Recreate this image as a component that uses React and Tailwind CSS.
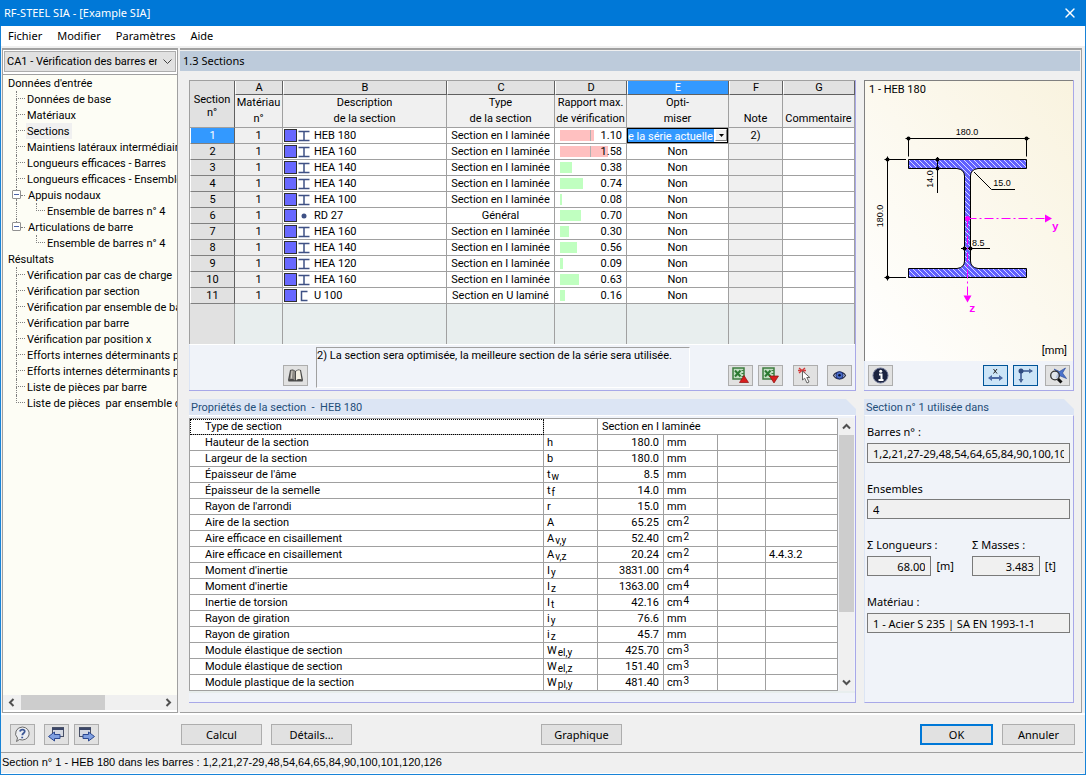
import React from 'react';
import { X } from 'lucide-react';

const MENUS = ['Fichier', 'Modifier', 'Paramètres', 'Aide'];

const INPUT_TREE = [
  { label: 'Données de base' },
  { label: 'Matériaux' },
  { label: 'Sections', active: true },
  { label: 'Maintiens latéraux intermédiaires' },
  { label: 'Longueurs efficaces - Barres' },
  { label: 'Longueurs efficaces - Ensembles' },
  { label: 'Appuis nodaux', children: ['Ensemble de barres n° 4'] },
  { label: 'Articulations de barre', children: ['Ensemble de barres n° 4'] },
];

const RESULT_TREE = [
  { label: 'Vérification par cas de charge' },
  { label: 'Vérification par section' },
  { label: 'Vérification par ensemble de barres' },
  { label: 'Vérification par barre' },
  { label: 'Vérification par position x' },
  { label: 'Efforts internes déterminants par barre' },
  { label: 'Efforts internes déterminants par ensemble' },
  { label: 'Liste de pièces par barre' },
  { label: 'Liste de pièces  par ensemble de barres' },
];

const SECTIONS = [
  { name: 'HEB 180', shape: 'I', type: 'Section en I laminée', ratio: 1.1 },
  { name: 'HEA 160', shape: 'I', type: 'Section en I laminée', ratio: 1.58 },
  { name: 'HEA 140', shape: 'I', type: 'Section en I laminée', ratio: 0.38 },
  { name: 'HEA 140', shape: 'I', type: 'Section en I laminée', ratio: 0.74 },
  { name: 'HEA 100', shape: 'I', type: 'Section en I laminée', ratio: 0.08 },
  { name: 'RD 27', shape: 'O', type: 'Général', ratio: 0.7 },
  { name: 'HEA 160', shape: 'I', type: 'Section en I laminée', ratio: 0.3 },
  { name: 'HEA 140', shape: 'I', type: 'Section en I laminée', ratio: 0.56 },
  { name: 'HEA 120', shape: 'I', type: 'Section en I laminée', ratio: 0.09 },
  { name: 'HEA 160', shape: 'I', type: 'Section en I laminée', ratio: 0.63 },
  { name: 'U 100', shape: 'U', type: 'Section en U laminé', ratio: 0.16 },
];

const HEADERS = [
  ['Matériau', 'n°'],
  ['Description', 'de la section'],
  ['Type', 'de la section'],
  ['Rapport max.', 'de vérification'],
  ['Opti-', 'miser'],
  ['', 'Note'],
  ['', 'Commentaire'],
];

const PROPERTIES = [
  ['Hauteur de la section', 'h', '', '180.0', 'mm', ''],
  ['Largeur de la section', 'b', '', '180.0', 'mm', ''],
  ["Épaisseur de l'âme", 't', 'w', '8.5', 'mm', ''],
  ['Épaisseur de la semelle', 't', 'f', '14.0', 'mm', ''],
  ["Rayon de l'arrondi", 'r', '', '15.0', 'mm', ''],
  ['Aire de la section', 'A', '', '65.25', 'cm', '2'],
  ['Aire efficace en cisaillement', 'A', 'v,y', '52.40', 'cm', '2'],
  ['Aire efficace en cisaillement', 'A', 'v,z', '20.24', 'cm', '2', '4.4.3.2'],
  ["Moment d'inertie", 'I', 'y', '3831.00', 'cm', '4'],
  ["Moment d'inertie", 'I', 'z', '1363.00', 'cm', '4'],
  ['Inertie de torsion', 'I', 't', '42.16', 'cm', '4'],
  ['Rayon de giration', 'i', 'y', '76.6', 'mm', ''],
  ['Rayon de giration', 'i', 'z', '45.7', 'mm', ''],
  ['Module élastique de section', 'W', 'el,y', '425.70', 'cm', '3'],
  ['Module élastique de section', 'W', 'el,z', '151.40', 'cm', '3'],
  ['Module plastique de la section', 'W', 'pl,y', '481.40', 'cm', '3'],
];

const IconButton = ({ label, pressed, children }) => (
  <button
    aria-label={label}
    className={`flex h-[21px] w-[25px] shrink-0 items-center justify-center border ${
      pressed ? 'border-[#005499] bg-[#cce4f7]' : 'border-[#adadad] bg-[#e1e1e1]'
    }`}
  >
    {children}
  </button>
);

const PushButton = ({ className = '', children }) => (
  <button className={`h-[21px] shrink-0 bg-[#e1e1e1] text-center leading-[17px] ${className}`}>{children}</button>
);

const Chevron = ({ d }) => (
  <svg width="9" height="9" viewBox="0 0 9 9" fill="none" stroke="#505050" strokeWidth="2">
    <path d={d} />
  </svg>
);

/* ---------- tree ---------- */

const Branch = ({ last }) => (
  <span className="flex w-[9px] shrink-0 flex-col">
    <span className="h-2 border-b border-l border-dotted border-[#808080]" />
    <span className={`h-2 ${last ? '' : 'border-l border-dotted border-[#808080]'}`} />
  </span>
);

const Expander = ({ last }) => (
  <span className="flex w-[14px] shrink-0 items-center">
    <span className="flex w-[9px] flex-col items-center">
      <span className="h-[3px] border-l border-dotted border-[#808080]" />
      <span className="flex h-[9px] w-[9px] items-center justify-center rounded-[1px] border border-[#919191] bg-white">
        <span className="h-px w-[5px] bg-[#4b63a7]" />
      </span>
      <span className={`h-1 ${last ? '' : 'border-l border-dotted border-[#808080]'}`} />
    </span>
    <span className="w-[4px] border-b border-dotted border-[#808080]" />
  </span>
);

const TreeGroup = ({ title, items }) => (
  <li>
    <div className="h-4 pl-[5px]">{title}</div>
    <ul>
      {items.map((item, i) => {
        const last = i === items.length - 1;
        return (
          <li key={item.label}>
            <div className={`flex h-4 ${item.children ? 'pl-[9px]' : 'pl-[13px]'}`}>
              {item.children ? <Expander last={last} /> : <Branch last={last} />}
              <span className={`ml-px whitespace-pre px-px ${item.active ? 'bg-[#f0f0f0] pr-[3px]' : ''}`}>
                {item.label}
              </span>
            </div>
            {item.children && (
              <ul className={last ? 'ml-[13px] pl-[20px]' : 'ml-[13px] border-l border-dotted border-[#808080] pl-[19px]'}>
                {item.children.map((child) => (
                  <li key={child} className="flex h-4">
                    <Branch last />
                    <span className="ml-px whitespace-pre px-px">{child}</span>
                  </li>
                ))}
              </ul>
            )}
          </li>
        );
      })}
    </ul>
  </li>
);

const Sidebar = () => (
  <aside className="flex w-[176px] shrink-0 flex-col border border-t-2 border-[#a0a0a0] bg-white">
    <div className="relative m-px mb-0">
      <select
        aria-label="Cas"
        className="h-[21px] w-full appearance-none truncate border border-[#adadad] bg-[#e1e1e1] pl-[2px] pr-[18px] pt-px text-clip"
      >
        <option>CA1 - Vérification des barres en acier</option>
      </select>
      <svg className="pointer-events-none absolute right-1 top-[6px]" width="9" height="9" viewBox="0 0 9 9" fill="none" stroke="#404040">
        <path d="M0.5 2.5 L4.5 6.5 L8.5 2.5" />
      </svg>
    </div>
    <nav className="mt-[2px] flex-1 overflow-hidden border-t border-[#a0a0a0] bg-[#fdfdf5] leading-[18px]">
      <ul>
        <TreeGroup title="Données d'entrée" items={INPUT_TREE} />
        <TreeGroup title="Résultats" items={RESULT_TREE} />
      </ul>
    </nav>
    <div className="mb-[2px] flex h-[15px] items-center bg-[#f0f0f0] px-1">
      <Chevron d="M6.5 1 L3 4.5 L6.5 8" />
      <div className="ml-[5px] h-full w-[84px] bg-[#cdcdcd]" />
      <div className="ml-auto flex">
        <Chevron d="M2.5 1 L6 4.5 L2.5 8" />
      </div>
    </div>
  </aside>
);

/* ---------- sections table ---------- */

const ShapeIcon = ({ shape }) => (
  <svg width="12" height="12" viewBox="0 0 12 12" fill="none" stroke="#3f5185">
    {shape === 'I' && <path d="M0.5 1.5 H11.5 M0.5 10.5 H11.5 M6 1 V11" strokeWidth="1.5" />}
    {shape === 'U' && <path d="M9.5 1.5 H3.5 V10.5 H9.5" strokeWidth="1.5" />}
    {shape === 'O' && <circle cx="6" cy="6" r="2.5" fill="#3f5185" stroke="none" />}
  </svg>
);

const RatioCell = ({ ratio }) => {
  const failed = ratio > 1;
  return (
    <div className="relative h-[15px] pr-1 text-right">
      <div
        className={`absolute left-[5px] top-[2px] h-[11px] ${failed ? 'bg-[#ffc0c0]' : 'bg-[#c0ffc0]'}`}
        style={{ width: Math.max(2, Math.round(ratio * 30.5)) }}
      />
      {failed && <div className="absolute left-[35px] top-[2px] h-[11px] w-px bg-[#b0b0b0]" />}
      <span className="relative">{ratio.toFixed(2)}</span>
    </div>
  );
};

const CELL = 'border-b border-r border-[#a0a0a0] p-0 overflow-hidden whitespace-nowrap';

const SectionsTable = () => (
  <table className="w-full table-fixed border-separate border-spacing-0 border-l border-t border-[#a0a0a0] text-center leading-[15px]">
    <colgroup>
      <col className="w-[45px]" />
      <col className="w-[48px]" />
      <col className="w-[164px]" />
      <col className="w-[108px]" />
      <col className="w-[72px]" />
      <col className="w-[102px]" />
      <col className="w-[54px]" />
      <col className="w-[72px]" />
    </colgroup>
    <thead>
      <tr className="h-[14px] leading-[13px]">
        <th rowSpan={2} className={`${CELL} border-r-[#606060] bg-[#e1e1e1] pt-1 font-normal`}>
          Section
          <br />
          n°
        </th>
        {['A', 'B', 'C', 'D', 'E', 'F', 'G'].map((letter) => (
          <th
            key={letter}
            className={`border-b border-l border-r border-b-[#606060] border-l-white border-r-[#606060] p-0 font-normal ${
              letter === 'E' ? 'bg-[#3399ff] text-white' : 'bg-[#e1e1e1]'
            }`}
          >
            {letter}
          </th>
        ))}
      </tr>
      <tr className="h-[33px] leading-4">
        {HEADERS.map(([top, bottom]) => (
          <th key={top + bottom} className={`${CELL} bg-[#f0f0f0] align-bottom font-normal`}>
            {top}
            <br />
            {bottom}
          </th>
        ))}
      </tr>
    </thead>
    <tbody>
      {SECTIONS.map((section, i) => (
        <tr key={i} className="h-4 bg-white">
          <th
            scope="row"
            className={`border-b border-l border-r border-b-[#808080] border-l-white border-r-[#606060] p-0 font-normal ${
              i === 0 ? 'bg-[#3399ff] text-white' : 'bg-[#e1e1e1]'
            }`}
          >
            {i + 1}
          </th>
          <td className={`${CELL} bg-[#f0f0f0]`}>1</td>
          <td className={CELL}>
            <div className="flex items-center pl-px">
              <span className="h-[13px] w-[13px] border border-[#303030] bg-[#6868ff]" />
              <span className="ml-px">
                <ShapeIcon shape={section.shape} />
              </span>
              <span className="ml-1">{section.name}</span>
            </div>
          </td>
          <td className={CELL}>{section.type}</td>
          <td className={CELL}>
            <RatioCell ratio={section.ratio} />
          </td>
          <td className={CELL}>
            {i === 0 ? (
              <div className="relative flex h-[15px] border border-black bg-white">
                <select
                  aria-label="Optimiser"
                  className="h-[13px] w-[86px] appearance-none overflow-hidden bg-[#3399ff] text-white"
                >
                  <option>e la série actuelle</option>
                </select>
                <span className="pointer-events-none absolute right-0 top-0 flex h-[12px] w-[12px] items-center justify-center border border-b-[#808080] border-l-white border-r-[#808080] border-t-white bg-[#f0f0f0]">
                  <svg width="5" height="3" viewBox="0 0 5 3">
                    <path d="M0 0 H5 L2.5 3 Z" />
                  </svg>
                </span>
              </div>
            ) : (
              'Non'
            )}
          </td>
          <td className={`${CELL} bg-[#f0f0f0]`}>{i === 0 ? '2)' : ''}</td>
          <td className={CELL} />
        </tr>
      ))}
      <tr className="h-10">
        <td className="border-r border-[#a0a0a0] bg-[#e1e1e1]" />
        {HEADERS.map(([top, bottom]) => (
          <td key={top + bottom} className="border-r border-[#a0a0a0] bg-[#e8eeee]" />
        ))}
      </tr>
    </tbody>
  </table>
);

const ExcelIcon = ({ down }) => (
  <svg width="17" height="17" viewBox="0 0 17 17">
    <rect x="1" y="1" width="11" height="11" fill="#c4dfc4" stroke="#3d7d3f" strokeWidth="1.5" />
    <path d="M9.5 3.5 H12 M9.5 6.5 H12 M9.5 9.5 H12" stroke="#3d7d3f" />
    <path d="M3 3.5 L8.5 9.5 M8.5 3.5 L3 9.5" stroke="#2c7a32" strokeWidth="2" />
    {down ? (
      <path d="M7.5 9 H16.5 L12 16 Z" fill="#d81e1e" stroke="#8e0f0f" strokeWidth="0.7" />
    ) : (
      <path d="M7.5 15.5 H16.5 L12 8.5 Z" fill="#d81e1e" stroke="#8e0f0f" strokeWidth="0.7" />
    )}
  </svg>
);

const BookIcon = () => (
  <svg width="17" height="15" viewBox="0 0 17 15">
    <path d="M1 12 L3 2 C5 1 7 1.500 8.500 3 C10 1.500 12 1 14 2 L16 12 L15.500 13.500 H1.500 Z" fill="#4a4a4a" />
    <path d="M2.500 11.500 L4 2.500 C5.500 1.800 7 2.500 8 3.500 L8 12.500 C6.500 11 4.500 10.800 2.500 11.500 Z" fill="#8f8c86" />
    <path d="M14.500 11.500 L13 2.500 C11.500 1.800 10 2.500 9 3.500 L9 12.500 C10.500 11 12.500 10.800 14.500 11.500 Z" fill="#f4f0e4" />
    <path d="M5 3 L4.300 10.500" stroke="#d8d4cc" />
  </svg>
);

const PickIcon = () => (
  <svg width="17" height="17" viewBox="0 0 17 17">
    <path d="M2 1 L8 6 M8 1 L2 6 M1 3.500 H9" stroke="#d43a3a" strokeWidth="1.300" />
    <path d="M5.500 4 V13 L7.700 11.200 L10 16 L12 15 L9.800 10.500 H12.800 Z" fill="#fff" stroke="#555" strokeWidth="0.9" />
  </svg>
);

const EyeIcon = () => (
  <svg width="15" height="11" viewBox="0 0 15 11">
    <path d="M1.500 5.500 C4 1 11 1 13.500 5.500 C11 10 4 10 1.500 5.500 Z" fill="#c9d3ec" stroke="#2a2f45" strokeWidth="1.200" />
    <circle cx="7.500" cy="5.300" r="3.600" fill="#4a6cc8" stroke="#1d2f74" />
    <circle cx="7.500" cy="5.300" r="1.300" fill="#0c1330" />
  </svg>
);

const SectionsPanel = () => (
  <section className="flex flex-col border-b border-r border-[#a8a8e8] bg-[#f0f3f9]">
    <SectionsTable />
    <div className="flex flex-1 border-l border-t border-l-[#dce5f4] border-t-white pb-[2px] pt-[2px]">
      <div className="ml-[93px] mt-[18px]">
        <IconButton label="Bibliothèque">
          <BookIcon />
        </IconButton>
      </div>
      <p className="ml-2 mr-[38px] h-[41px] flex-1 border border-b-white border-l-[#a0a0a0] border-r-white border-t-[#a0a0a0] leading-4">
        2) La section sera optimisée, la meilleure section de la série sera utilisée.
      </p>
      <div className="mr-[3px] mt-[18px] flex">
        <IconButton label="Exporter vers Excel">
          <ExcelIcon />
        </IconButton>
        <div className="ml-[5px]">
          <IconButton label="Importer depuis Excel">
            <ExcelIcon down />
          </IconButton>
        </div>
        <div className="ml-[10px]">
          <IconButton label="Sélectionner">
            <PickIcon />
          </IconButton>
        </div>
        <div className="ml-[9px]">
          <IconButton label="Afficher">
            <EyeIcon />
          </IconButton>
        </div>
      </div>
    </div>
  </section>
);

/* ---------- section drawing ---------- */

const SectionDrawing = () => (
  <svg width="208" height="236" viewBox="0 18 208 236" className="mx-auto block" fontSize="9" fontFamily="'Liberation Sans', sans-serif">
    <defs>
      <pattern id="hatch" width="5" height="5" patternUnits="userSpaceOnUse">
        <rect width="5" height="5" fill="#6060ff" />
        <path d="M-1 -1 L6 6 M-1 4 L1 6 M4 -1 L6 1" stroke="#d8d8ff" strokeWidth="1" />
      </pattern>
    </defs>
    <path
      d="M43.500 78.500 H161.500 V87.500 H113 Q105.500 88.500 105.500 95 V180 Q105.500 186.500 113 187.500 H161.500 V196.500 H43.500 V187.500 H92 Q99.500 186.500 99.500 180 V95 Q99.500 88.500 92 87.500 H43.500 Z"
      fill="url(#hatch)"
      stroke="#000"
    />
    <g stroke="#000" fill="none">
      <path d="M40.500 57.500 H164.500 M43.500 57.500 V75.500 M161.500 57.500 V75.500" />
      <path d="M22.500 75.500 V199.500 M19.500 78.500 H41 M19.500 196.500 H41" />
      <path d="M72.500 76 V112 M109 91 L126.500 108.500 H150" />
      <path d="M96 167.500 H125" />
    </g>
    {[[43.5, 57.5], [161.5, 57.5], [22.5, 78.5], [22.5, 196.5], [72.5, 78.5], [72.5, 87.5], [99.5, 167.5], [105.5, 167.5]].map(
      ([x, y]) => (
        <circle key={`${x}-${y}`} cx={x} cy={y} r="2" />
      ),
    )}
    <text x="102" y="54" textAnchor="middle">180.0</text>
    <text x="137" y="105" textAnchor="middle">15.0</text>
    <text x="107" y="165">8.5</text>
    <text transform="translate(18 135) rotate(-90)" textAnchor="middle">180.0</text>
    <text transform="translate(68 98) rotate(-90)" textAnchor="middle">14.0</text>
    <g stroke="#ff00ff" fill="none" strokeDasharray="9 3 2 3">
      <path d="M102.500 137.500 H181 M102.500 137.500 V216" />
    </g>
    <g fill="#ff00ff">
      <circle cx="102.500" cy="137.500" r="2.500" />
      <path d="M180 133.500 L187 137.500 L180 141.500 Z M98.500 214.500 L102.500 221.500 L106.500 214.500 Z" />
      <g fontFamily="'Liberation Mono', monospace" fontWeight="bold" fontSize="11">
        <text x="187" y="149">y</text>
        <text x="104" y="231">z</text>
      </g>
    </g>
  </svg>
);

const GraphicPanel = () => (
  <section className="flex flex-col border-b border-r border-[#a8a8e8] bg-[#f0f3f9]">
    <div className="flex flex-1 flex-col border-l border-t border-[#808080] bg-linear-to-tr from-white to-[#f9f3df]">
      <div className="h-[18px] pl-1 leading-[17px]">1 - HEB 180</div>
      <SectionDrawing />
      <div className="mt-auto pb-[2px] pr-[6px] text-right leading-[17px]">[mm]</div>
    </div>
    <div className="flex h-[29px] border-l border-[#dce5f4] pl-[3px] pr-[3px] pt-1">
      <IconButton label="Informations">
        <svg width="17" height="17" viewBox="0 0 17 17">
          <circle cx="8.500" cy="8.500" r="7.500" fill="#1b2340" stroke="#6b7394" />
          <path d="M7 7.500 H9.500 V13 M6.500 13 H11.500" stroke="#fff" strokeWidth="2" fill="none" />
          <circle cx="8.700" cy="4.300" r="1.500" fill="#fff" />
        </svg>
      </IconButton>
      <div className="ml-auto">
        <IconButton label="Afficher les cotes" pressed>
          <svg width="17" height="17" viewBox="0 0 17 17" fill="none">
            <path d="M6.500 2 L10 6.500 M10 2 L6.500 6.500" stroke="#222" />
            <path d="M3 11 H14" stroke="#4a68a4" strokeWidth="2" />
            <path d="M1 11 L5 8 V14 Z M16 11 L12 8 V14 Z" fill="#4a68a4" />
          </svg>
        </IconButton>
      </div>
      <div className="ml-[5px]">
        <IconButton label="Afficher les axes" pressed>
          <svg width="17" height="17" viewBox="0 0 17 17" fill="none">
            <path d="M4 15 V4 H15" stroke="#5b76a8" strokeWidth="2" />
            <circle cx="4" cy="4" r="2.500" fill="#2f4a80" />
            <path d="M12 1.500 L16 4 L12 6.500 Z M1.500 12 L4 16 L6.500 12 Z" fill="#4a6596" />
          </svg>
        </IconButton>
      </div>
      <div className="ml-[7px]">
        <IconButton label="Vue complète">
          <svg width="18" height="17" viewBox="0 0 18 17">
            <path d="M5 2 L10.500 4.500 L16.500 1 L13.500 6 L17.500 11.500 L11.500 9 L7 11 L9 6 Z" fill="#4a72cc" stroke="#2f4f9c" strokeWidth="0.7" />
            <circle cx="6" cy="8.500" r="4.300" fill="#dfe5ee" fillOpacity="0.75" stroke="#333" strokeWidth="1.300" />
            <path d="M9 12 L12.500 15.500" stroke="#111" strokeWidth="3" />
          </svg>
        </IconButton>
      </div>
    </div>
  </section>
);

/* ---------- lower panels ---------- */

const PanelHeader = ({ children }) => (
  <h2 className="h-4 bg-[#dce5f4] pl-[2px] leading-[18px] text-[#1f4e79] [clip-path:polygon(0_0,calc(100%-10px)_0,100%_10px,100%_100%,0_100%)]">
    {children}
  </h2>
);

const PropertiesPanel = () => (
  <section className="flex flex-col">
    <PanelHeader>
      <span className="whitespace-pre">Propriétés de la section  -  HEB 180</span>
    </PanelHeader>
    <div className="flex-1 border-b border-r border-t border-b-[#a8a8e8] border-r-[#a8a8e8] border-t-white bg-[#f0f3f9] pb-2 pt-[2px]">
      <div className="flex border-b-2 border-[#e8eeee]">
        <table className="flex-1 table-fixed border-separate border-spacing-0 border-l border-t border-[#a0a0a0] bg-white leading-[15px]">
          <colgroup>
            <col className="w-[354px]" />
            <col className="w-[54px]" />
            <col className="w-[66px]" />
            <col className="w-[54px]" />
            <col className="w-[48px]" />
            <col className="w-[72px]" />
          </colgroup>
          <tbody>
            <tr className="h-4">
              <td className={`${CELL} pl-[15px] outline-1 -outline-offset-1 outline-dotted outline-black`}>Type de section</td>
              <td className={CELL} />
              <td colSpan={3} className={`${CELL} pl-1`}>
                Section en I laminée
              </td>
              <td className={CELL} />
            </tr>
            {PROPERTIES.map(([name, symbol, sub, value, unit, power, ref], i) => (
              <tr key={i} className="h-4">
                <td className={`${CELL} pl-[15px]`}>{name}</td>
                <td className={`${CELL} pl-[3px]`}>
                  {symbol}
                  {sub && <span className="ml-px align-[-2px] text-[10px] leading-none">{sub}</span>}
                </td>
                <td className={`${CELL} pr-1 text-right`}>{value}</td>
                <td className={`${CELL} pl-[3px]`}>
                  {unit}
                  {power && <span className="ml-px align-[2px] text-[10px] leading-none">{power}</span>}
                </td>
                <td className={CELL} />
                <td className={`${CELL} pl-[3px]`}>{ref}</td>
              </tr>
            ))}
          </tbody>
        </table>
        <div className="ml-px mr-px flex w-[15px] flex-col bg-[#f0f0f0]">
          <div className="flex h-[17px] items-center justify-center">
            <Chevron d="M1 6.500 L4.500 3 L8 6.500" />
          </div>
          <div className="h-[177px] bg-[#cdcdcd]" />
          <div className="mt-auto flex h-[17px] items-center justify-center">
            <Chevron d="M1 2.500 L4.500 6 L8 2.500" />
          </div>
        </div>
      </div>
    </div>
  </section>
);

const FIELD = 'h-5 w-full min-w-0 border border-[#7a7a7a] bg-[#f0f0f0] px-[5px] outline-none';

const UsagePanel = () => (
  <section className="flex flex-col">
    <PanelHeader>Section n° 1 utilisée dans</PanelHeader>
    <div className="flex flex-1 flex-col border border-b-[#a8a8e8] border-l-[#dce5f4] border-r-[#a8a8e8] border-t-white bg-[#f0f3f9] pl-[2px] pr-[3px] pt-2 font-['Noto_Sans',sans-serif]">
      <label htmlFor="barres" className="h-[19px] leading-4">Barres n° :</label>
      <input id="barres" readOnly className={FIELD} value="1,2,21,27-29,48,54,64,65,84,90,100,101,120,126" />
      <label htmlFor="ensembles" className="mt-[18px] h-[18px] leading-4">Ensembles</label>
      <input id="ensembles" readOnly className={FIELD} value="4" />
      <div className="mt-[18px] flex gap-[18px]">
        <div>
          <label htmlFor="longueurs" className="block h-[19px] leading-4">Σ Longueurs :</label>
          <div className="flex w-[87px] items-center gap-[5px]">
            <input id="longueurs" readOnly className={`${FIELD} text-right`} value="68.00" />
            <span>[m]</span>
          </div>
        </div>
        <div>
          <label htmlFor="masses" className="block h-[19px] leading-4">Σ Masses :</label>
          <div className="flex w-[84px] items-center gap-[5px]">
            <input id="masses" readOnly className={`${FIELD} text-right`} value="3.483" />
            <span>[t]</span>
          </div>
        </div>
      </div>
      <label htmlFor="materiau" className="mt-[18px] h-[19px] leading-4">Matériau :</label>
      <input id="materiau" readOnly className={FIELD} value="1 - Acier S 235 | SA EN 1993-1-1" />
    </div>
  </section>
);

/* ---------- footer ---------- */

const WindowArrow = ({ forward }) => (
  <svg width="17" height="17" viewBox="0 0 17 17">
    <rect x={forward ? 1.5 : 4.5} y="1.500" width="11" height="9" fill="#d5d9e2" stroke="#4a5268" />
    <path d={forward ? 'M1 3 H13' : 'M4 3 H16'} stroke="#3b4668" strokeWidth="2" />
    {forward ? (
      <path d="M5 8.500 H10.500 V6 L16.500 10.500 L10.500 15 V12.500 H5 Z" fill="#7f9fe0" stroke="#2c4890" />
    ) : (
      <path d="M12 8.500 H6.500 V6 L0.500 10.500 L6.500 15 V12.500 H12 Z" fill="#7f9fe0" stroke="#2c4890" />
    )}
  </svg>
);

const Footer = () => (
  <footer className="flex h-[37px] pl-[9px] pr-[10px] pt-[9px] font-['Noto_Sans',sans-serif]">
    <div className="flex w-[171px] shrink-0">
      <IconButton label="Aide">
        <svg width="17" height="17" viewBox="0 0 17 17">
          <path d="M8.500 1 A7 6.500 0 1 1 5.500 13.500 L2.500 15.500 L3.500 12 A7 6.500 0 0 1 8.500 1 Z" fill="#eceef2" stroke="#6b6b6b" />
          <path d="M6 5.500 C6.500 2.800 11 3 10.700 5.500 C10.500 7.300 8.300 7.300 8.300 9.300 M8.200 10.800 V12.300" fill="none" stroke="#3b5694" strokeWidth="1.800" />
        </svg>
      </IconButton>
      <div className="ml-[9px]">
        <IconButton label="Précédent">
          <WindowArrow />
        </IconButton>
      </div>
      <div className="ml-[5px]">
        <IconButton label="Suivant">
          <WindowArrow forward />
        </IconButton>
      </div>
    </div>
    <PushButton className="w-[81px] border border-[#adadad]">Calcul</PushButton>
    <PushButton className="ml-[9px] w-[81px] border border-[#adadad]">Détails...</PushButton>
    <PushButton className="ml-[189px] w-[81px] border border-[#adadad]">Graphique</PushButton>
    <PushButton className="ml-auto w-[73px] border-2 border-[#0078d7]">OK</PushButton>
    <PushButton className="ml-[9px] w-[73px] border border-[#adadad]">Annuler</PushButton>
  </footer>
);

const App = () => (
  <div className="flex min-h-screen flex-col border border-[#1883d7] bg-[#f0f0f0] font-['Roboto',Arial,sans-serif] text-[11px] text-black">
    <header className="-mx-px -mt-px flex h-[26px] items-center justify-between bg-[#0078d7] pl-1 pr-2 font-['Noto_Sans',sans-serif] text-white">
      <h1>RF-STEEL SIA - [Example SIA]</h1>
      <button aria-label="Fermer">
        <X size={16} strokeWidth={2} />
      </button>
    </header>
    <nav className="mb-[2px] flex h-5 items-center gap-[15px] bg-white pl-[7px] font-['Noto_Sans',sans-serif]">
      {MENUS.map((menu) => (
        <button key={menu}>{menu}</button>
      ))}
    </nav>
    <div className="flex flex-1 border-b-2 border-white pl-px pr-[3px]">
      <Sidebar />
      <main className="ml-[2px] flex min-w-0 flex-1 flex-col border-b border-r border-t-2 border-[#a0a0a0]">
        <h2 className="mr-px mt-px h-5 bg-[#bdcbdb] pl-[3px] font-['Noto_Sans',sans-serif] leading-5">1.3 Sections</h2>
        <div className="grid flex-1 grid-cols-[minmax(0,1fr)_210px] grid-rows-[311px_1fr] gap-2 pb-[9px] pl-[9px] pr-[7px] pt-[9px]">
          <SectionsPanel />
          <GraphicPanel />
          <PropertiesPanel />
          <UsagePanel />
        </div>
      </main>
    </div>
    <Footer />
    <div className="mr-[2px] h-[22px] border-b border-t border-b-white border-t-[#a0a0a0] pl-px font-['Liberation_Sans',Arial,sans-serif] leading-[19px]">
      Section n° 1 - HEB 180 dans les barres : 1,2,21,27-29,48,54,64,65,84,90,100,101,120,126
    </div>
  </div>
);

export default App;
